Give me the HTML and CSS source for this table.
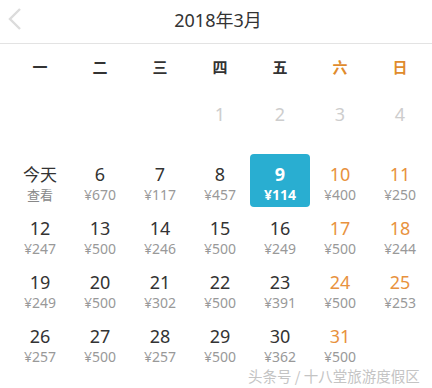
FILE: index.html
```html
<!DOCTYPE html>
<html lang="zh-CN">
<head>
<meta charset="utf-8">
<link rel="stylesheet" href="styles.css">
</head>
<body>
<div class="page">
  <header class="bar">
    <span class="back"><svg width="16" height="24" viewBox="0 0 16 24"><path d="M13 2 L3 12 L13 22" fill="none" stroke="#dcdcdc" stroke-width="2.4"/></svg></span>
    <h1 class="title">2018年3月</h1>
  </header>
  <div class="week">
    <span>一</span><span>二</span><span>三</span><span>四</span><span>五</span><span class="we">六</span><span class="we">日</span>
  </div>
  <div class="grid">
    <div class="cell"></div><div class="cell"></div><div class="cell"></div>
    <div class="cell off"><b>1</b></div>
    <div class="cell off"><b>2</b></div>
    <div class="cell off"><b>3</b></div>
    <div class="cell off"><b>4</b></div>

    <div class="cell today"><b>今天</b><i>查看</i></div>
    <div class="cell"><b>6</b><i>¥670</i></div>
    <div class="cell"><b>7</b><i>¥117</i></div>
    <div class="cell"><b>8</b><i>¥457</i></div>
    <div class="cell sel"><b>9</b><i>¥114</i></div>
    <div class="cell we"><b>10</b><i>¥400</i></div>
    <div class="cell we"><b>11</b><i>¥250</i></div>

    <div class="cell"><b>12</b><i>¥247</i></div>
    <div class="cell"><b>13</b><i>¥500</i></div>
    <div class="cell"><b>14</b><i>¥246</i></div>
    <div class="cell"><b>15</b><i>¥500</i></div>
    <div class="cell"><b>16</b><i>¥249</i></div>
    <div class="cell we"><b>17</b><i>¥500</i></div>
    <div class="cell we"><b>18</b><i>¥244</i></div>

    <div class="cell"><b>19</b><i>¥249</i></div>
    <div class="cell"><b>20</b><i>¥500</i></div>
    <div class="cell"><b>21</b><i>¥302</i></div>
    <div class="cell"><b>22</b><i>¥500</i></div>
    <div class="cell"><b>23</b><i>¥391</i></div>
    <div class="cell we"><b>24</b><i>¥500</i></div>
    <div class="cell we"><b>25</b><i>¥253</i></div>

    <div class="cell"><b>26</b><i>¥257</i></div>
    <div class="cell"><b>27</b><i>¥500</i></div>
    <div class="cell"><b>28</b><i>¥257</i></div>
    <div class="cell"><b>29</b><i>¥500</i></div>
    <div class="cell"><b>30</b><i>¥362</i></div>
    <div class="cell we"><b>31</b><i>¥500</i></div>
    <div class="cell"></div>
  </div>
  <div class="mark">头条号 / 十八堂旅游度假区</div>
</div>
</body>
</html>
```
FILE: styles.css
```css
html, body {
  margin: 0;
  padding: 0;
  background: #fff;
}
body {
  font-family: "Noto Sans", "Noto Sans CJK SC", sans-serif;
  color: #333;
}
.page {
  position: relative;
  width: 432px;
  height: 388px;
  overflow: hidden;
}
.bar {
  height: 43px;
  border-bottom: 1px solid #e3e3e3;
  display: flex;
  align-items: center;
  justify-content: center;
  position: relative;
}
.back {
  position: absolute;
  left: 7px;
  top: 7px;
  width: 16px;
  height: 24px;
}
.title {
  margin: 0 0 6px 4px;
  font-size: 18px;
  font-weight: normal;
  color: #333;
}
.week {
  height: 44px;
  margin: 0 2px 0 10px;
  display: grid;
  grid-template-columns: repeat(7, 60px);
  align-items: center;
  font-family: "Noto Sans CJK SC", sans-serif;
  font-size: 15px;
  font-weight: bold;
  color: #333;
}
.week span {
  text-align: center;
}
.week .we {
  color: #e08b2d;
}
.grid {
  margin: 12px 0 0 10px;
  display: grid;
  grid-template-columns: repeat(7, 60px);
  grid-auto-rows: 54px;
}
.cell {
  display: flex;
  flex-direction: column;
  align-items: center;
  padding-top: 9px;
  box-sizing: border-box;
}
.cell b {
  font-weight: normal;
  font-size: 18px;
  line-height: 22px;
  color: #333;
}
.cell i {
  font-style: normal;
  font-size: 14px;
  line-height: 20px;
  color: #999;
}
.cell.off b {
  color: #cdcdcd;
  margin-top: -6px;
}
.cell.we b {
  color: #e8923e;
}
.cell.today b {
  font-family: "Noto Sans CJK SC", sans-serif;
  font-size: 17px;
}
.cell.today i {
  font-family: "Noto Sans CJK SC", sans-serif;
  font-size: 13px;
  color: #888;
}
.cell.sel {
  background: #29aed1;
  border-radius: 4px;
  height: 53px;
}
.cell.sel b, .cell.sel i {
  color: #fff;
  font-weight: bold;
}
.mark {
  position: absolute;
  left: 248px;
  top: 366px;
  font-family: "Noto Sans CJK SC", sans-serif;
  font-size: 14.5px;
  line-height: 20px;
  color: #c4c4c4;
  text-shadow: 0 0 1px #fff, 0 0 2px #fff;
  white-space: nowrap;
}
```
